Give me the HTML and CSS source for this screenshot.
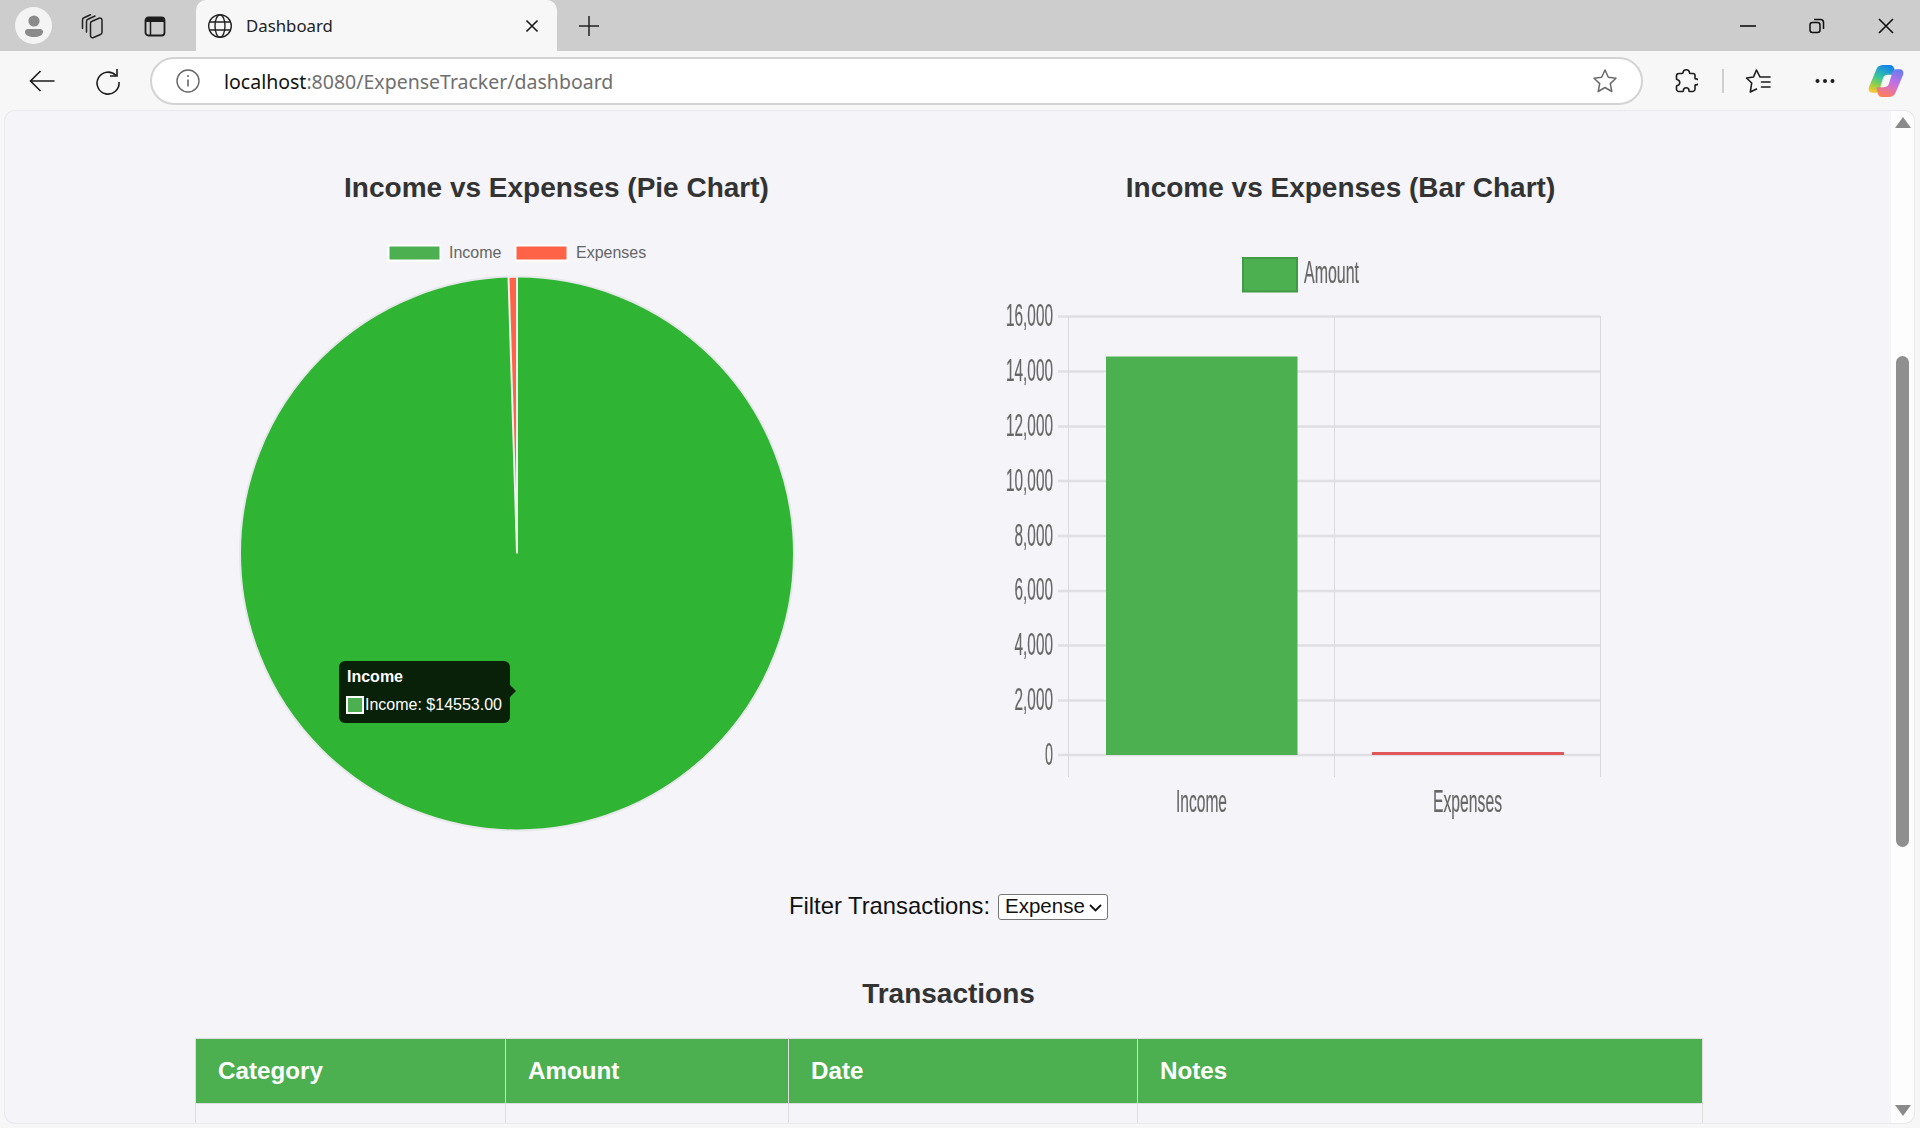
FILE: index.html
```html
<!DOCTYPE html>
<html lang="en">
<head>
<meta charset="utf-8">
<title>Dashboard</title>
<link rel="stylesheet" href="styles.css">
</head>
<body>
<div class="browser">
  <header class="tabstrip">
    <div class="avatar">
      <svg width="24" height="24" viewBox="0 0 24 24"><circle cx="12" cy="7" r="5.6" fill="#8b8b8b"/><path d="M3 18a3 3 0 0 1 3-3h12a3 3 0 0 1 3 3c0 3-4 5-9 5s-9-2-9-5z" fill="#8b8b8b"/></svg>
    </div>
    <button class="strip-icon first">
      <svg width="26" height="26" viewBox="0 0 26 26" fill="none" stroke="#222" stroke-width="1.500" stroke-linejoin="round" stroke-linecap="round"><path d="M10.500 10.500c0-1 .5-1.800 1.500-2.200l7-3c1.500-.6 3 .4 3 2v12c0 1-.5 1.800-1.500 2.200l-7 3c-1.500.6-3-.4-3-2z"/><path d="M6.500 19V8.500c0-1 .5-1.800 1.500-2.200L15 3"/><path d="M2.500 15.500V7c0-1 .5-1.800 1.500-2.200l6.500-3"/></svg>
    </button>
    <button class="strip-icon second">
      <svg width="24" height="24" viewBox="0 0 24 24"><rect x="2.500" y="3.500" width="19" height="18" rx="3" fill="none" stroke="#1d1d1d" stroke-width="1.800"/><path d="M3 8V6a3 3 0 0 1 3-2.500h12A3 3 0 0 1 21 6v2z" fill="#1d1d1d"/><path d="M7.500 8v13" stroke="#1d1d1d" stroke-width="1.500"/></svg>
    </button>
    <div class="tab">
      <svg width="26" height="26" viewBox="0 0 26 26" fill="none" stroke="#222" stroke-width="1.400"><circle cx="13" cy="13" r="11.300"/><ellipse cx="13" cy="13" rx="5" ry="11.300"/><path d="M2.500 9h21M2.500 17h21"/></svg>
      <span class="tab-title">Dashboard</span>
      <svg class="tab-close" width="14" height="14" viewBox="0 0 14 14" stroke="#1a1a1a" stroke-width="1.600"><path d="M1.500 1.500l11 11M12.500 1.500l-11 11"/></svg>
    </div>
    <button class="new-tab">
      <svg width="22" height="22" viewBox="0 0 22 22" stroke="#222" stroke-width="1.500"><path d="M11 1v20M1 11h20"/></svg>
    </button>
    <div class="window-controls">
      <svg width="16" height="16" viewBox="0 0 16 16" stroke="#111" stroke-width="1.600"><path d="M0 8h16"/></svg>
      <svg width="16" height="16" viewBox="0 0 16 16" fill="none" stroke="#111" stroke-width="1.500"><rect x="1" y="4.500" width="10" height="10" rx="2.500"/><path d="M5 1.500h6.500A3 3 0 0 1 14.500 4.500V11"/></svg>
      <svg width="16" height="16" viewBox="0 0 16 16" stroke="#111" stroke-width="1.600"><path d="M1 1l14 14M15 1L1 15"/></svg>
    </div>
  </header>

  <nav class="toolbar">
    <button class="tool back">
      <svg width="26" height="24" viewBox="0 0 26 24" fill="none" stroke="#1c1c1c" stroke-width="1.600"><path d="M25.500 12H1.500M11.500 2L1.500 12l10 10"/></svg>
    </button>
    <button class="tool reload">
      <svg width="26" height="28" viewBox="0 0 26 28" fill="none" stroke="#1c1c1c" stroke-width="1.600"><path d="M21 8.500A11 11 0 1 0 24 15"/><path d="M22 2v7h-7"/></svg>
    </button>
    <div class="address">
      <svg width="24" height="24" viewBox="0 0 24 24" fill="none" stroke="#666" stroke-width="1.400"><circle cx="12" cy="12" r="11"/><path d="M12 10.500v7" stroke-width="1.600"/><circle cx="12" cy="7" r="1" fill="#666" stroke="none"/></svg>
      <span class="url"><span class="host">localhost</span>:8080/ExpenseTracker/dashboard</span>
      <svg class="addr-star" width="26" height="26" viewBox="0 0 26 26" fill="none" stroke="#6a6a6a" stroke-width="1.500" stroke-linejoin="round"><path d="M13 2l3.300 7.300 7.700.9-5.700 5.400 1.500 7.900-6.800-4-6.800 4 1.500-7.900L2 10.200l7.700-.9z"/></svg>
    </div>
    <button class="tool puzzle">
      <svg width="24" height="26" viewBox="0 0 24 26" fill="none" stroke="#1c1c1c" stroke-width="1.600" stroke-linejoin="round"><path d="M9 4.500a3.300 3.300 0 0 1 6.500 0c0 .8 0 1 .5 1h3a2 2 0 0 1 2 2v2.700c0 .6.500.7 1 .7a3 3 0 0 1 0 6c-.5 0-1 0-1 .6V21a2.500 2.500 0 0 1-2.500 2.500h-3c-.6 0-.5-.5-.5-1a2.800 2.800 0 0 0-5.600 0c0 .5 0 1-.5 1H5a2.500 2.500 0 0 1-2.500-2.500v-2.700c0-.6.500-.6 1-.8a3 3 0 0 0 0-5.800c-.5-.2-1-.2-1-.8V8a2.500 2.500 0 0 1 2.500-2.500h3c.5 0 1-.2 1-1z"/></svg>
    </button>
    <span class="divider"></span>
    <button class="tool favs">
      <svg width="26" height="26" viewBox="0 0 26 26" fill="none" stroke="#1c1c1c" stroke-width="1.600" stroke-linejoin="round"><path d="M15 9l-3.500-7-3 7-7 1 5.200 5-1.400 9 6.700-3.300"/><path d="M15 9h10M16.500 14h8.500M16.500 19h8.500" stroke-linecap="round"/></svg>
    </button>
    <button class="tool dots">
      <svg width="20" height="6" viewBox="0 0 20 6" fill="#1c1c1c"><circle cx="2.500" cy="3" r="2"/><circle cx="10" cy="3" r="2"/><circle cx="17.500" cy="3" r="2"/></svg>
    </button>
    <button class="tool copilot">
      <svg width="36" height="34" viewBox="0 0 34 32">
        <defs>
          <linearGradient id="cpA" x1="0.650" y1="0" x2="0.250" y2="1"><stop offset="0" stop-color="#1583ee"/><stop offset="0.450" stop-color="#35c4a0"/><stop offset="0.750" stop-color="#8fd04a"/><stop offset="1" stop-color="#f7c832"/></linearGradient>
          <linearGradient id="cpB" x1="0.750" y1="0" x2="0.350" y2="1"><stop offset="0" stop-color="#6b7cf0"/><stop offset="0.500" stop-color="#c86fe0"/><stop offset="1" stop-color="#ff7d5c"/></linearGradient>
        </defs>
        <path d="M15 1H21C23 1 24 2 25 5L26 10H19C16 10 14.500 12 14 14L11 24C10.500 26 9 27 7 27H4C1.500 27 0 25 .8 22L8 5C9 2 12 1 15 1Z" fill="url(#cpA)"/>
        <path d="M19 31H13C11 31 10 30 9 27L8 22H15C18 22 19.500 20 20 18L23 8C23.500 6 25 5 27 5H30C32.500 5 34 7 33.200 10L26 27C25 30 22 31 19 31Z" fill="url(#cpB)"/>
      </svg>
    </button>
  </nav>

  <div class="viewport">
    <main class="page">
      <section class="charts">
        <div class="chart-box pie-box">
          <h2 class="chart-title">Income vs Expenses (Pie Chart)</h2>
          <div class="canvas-wrap">
            <svg class="chart-svg" width="785" height="640" viewBox="163 220 785 640">
              <rect x="388.500" y="245.500" width="52" height="15" fill="#4caf50" stroke="#fff" stroke-width="2"/>
              <text class="legend-small" x="449" y="257.500">Income</text>
              <rect x="515.500" y="245.500" width="52" height="15" fill="#ff6347" stroke="#fff" stroke-width="2"/>
              <text class="legend-small" x="576" y="257.500">Expenses</text>
              <circle cx="517" cy="553.500" r="277" fill="#2fb533" stroke="#e8e8ec" stroke-width="2"/>
              <path d="M517 553.500L508.500 277A277 277 0 0 1 517 276.500z" fill="#ff6347" stroke="#f0f0f0" stroke-width="2"/>
            </svg>
            <div class="tooltip">
              <div class="tooltip-title">Income</div>
              <div class="tooltip-row"><span class="tooltip-swatch"></span>Income: $14553.00</div>
            </div>
          </div>
        </div>
        <div class="chart-box">
          <h2 class="chart-title">Income vs Expenses (Bar Chart)</h2>
          <div class="canvas-wrap">
            <svg class="chart-svg" width="785" height="640" viewBox="948 220 785 640">
              <rect x="1243" y="258" width="54" height="33.500" fill="#4caf50" stroke="#419b46" stroke-width="2"/>
              <text class="axis" x="1304" y="283" textLength="55" lengthAdjust="spacingAndGlyphs">Amount</text>
              <g class="grid-h">
                <path d="M1058 316.500H1600M1058 371.500H1600M1058 426.500H1600M1058 481H1600M1058 536H1600M1058 591H1600M1058 645.500H1600M1058 700.500H1600M1058 755H1600"/>
              </g>
              <path class="grid-v" d="M1068.500 316V777M1334.500 316V777M1600.500 316V777"/>
              <g>
                <text class="axis" x="1006" y="326" textLength="47" lengthAdjust="spacingAndGlyphs">16,000</text>
                <text class="axis" x="1006" y="381" textLength="47" lengthAdjust="spacingAndGlyphs">14,000</text>
                <text class="axis" x="1006" y="436" textLength="47" lengthAdjust="spacingAndGlyphs">12,000</text>
                <text class="axis" x="1006" y="491" textLength="47" lengthAdjust="spacingAndGlyphs">10,000</text>
                <text class="axis" x="1014.500" y="546" textLength="38.500" lengthAdjust="spacingAndGlyphs">8,000</text>
                <text class="axis" x="1014.500" y="600" textLength="38.500" lengthAdjust="spacingAndGlyphs">6,000</text>
                <text class="axis" x="1014.500" y="655" textLength="38.500" lengthAdjust="spacingAndGlyphs">4,000</text>
                <text class="axis" x="1014.500" y="710" textLength="38.500" lengthAdjust="spacingAndGlyphs">2,000</text>
                <text class="axis" x="1045" y="765" textLength="8" lengthAdjust="spacingAndGlyphs">0</text>
              </g>
              <rect x="1106" y="356.500" width="191.500" height="398.500" fill="#4caf50"/>
              <rect x="1372" y="752" width="192" height="3" fill="#e0575a"/>
              <text class="axis" x="1176" y="812" textLength="51" lengthAdjust="spacingAndGlyphs">Income</text>
              <text class="axis" x="1433" y="812" textLength="69" lengthAdjust="spacingAndGlyphs">Expenses</text>
            </svg>
          </div>
        </div>
      </section>

      <div class="filter">
        <label class="filter-label" for="filter">Filter Transactions:</label>
        <span class="select-wrap">
          <select class="filter-select" id="filter">
            <option>All</option>
            <option>Income</option>
            <option selected>Expense</option>
          </select>
          <svg class="select-chevron" width="13" height="8" viewBox="0 0 13 8" fill="none" stroke="#111" stroke-width="1.800"><path d="M1 1l5.500 5.500L12 1"/></svg>
        </span>
      </div>

      <h2 class="section-title">Transactions</h2>

      <table class="tx-table">
        <thead>
          <tr>
            <th class="col-category">Category</th>
            <th class="col-amount">Amount</th>
            <th class="col-date">Date</th>
            <th class="col-notes">Notes</th>
          </tr>
        </thead>
        <tbody>
          <tr class="empty-row"><td></td><td></td><td></td><td></td></tr>
        </tbody>
      </table>
    </main>
    <aside class="scrollbar">
      <span class="arrow-up"></span>
      <span class="thumb"></span>
      <span class="arrow-down"></span>
    </aside>
  </div>
</div>
</body>
</html>
```
FILE: styles.css
```css
* { box-sizing: border-box; }
html, body { margin: 0; height: 100%; overflow: hidden; }
body { font-family: "Liberation Sans", Arial, sans-serif; background: #f7f7f7; }
button { border: 0; background: none; padding: 0; display: flex; align-items: center; justify-content: center; }

.browser { height: 1128px; display: flex; flex-direction: column; }

.tabstrip { height: 51px; flex: none; background: #cdcdcd; display: flex; align-items: center; }
.avatar { width: 37px; height: 37px; margin-left: 15px; border-radius: 50%; background: #f4f4f4; display: flex; align-items: center; justify-content: center; }
.strip-icon { width: 26px; height: 26px; }
.strip-icon.first { margin-left: 28px; }
.strip-icon.second { margin-left: 36px; }
.tab { align-self: stretch; width: 361px; margin-left: 28px; padding: 0 17px 0 11px; background: #f7f7f7; border-radius: 10px 10px 0 0; display: flex; align-items: center; }
.tab-title { margin-left: 13px; font-family: "Noto Sans", sans-serif; font-size: 16.800px; color: #222; flex: 1; }
.tab-close { margin-right: 1px; }
.new-tab { width: 22px; height: 22px; margin-left: 21px; }
.window-controls { margin-left: auto; margin-right: 26px; display: flex; gap: 53px; align-items: center; }

.toolbar { height: 60px; flex: none; background: #f7f7f7; display: flex; align-items: center; }
.tool { flex: none; }
.back { margin-left: 29px; }
.reload { margin-left: 40px; }
.address { width: 1493.500px; height: 48px; margin-left: 28.500px; border: 2px solid #d3d3d3; border-radius: 24px; background: #fff; display: flex; align-items: center; padding: 0 23px 0 24px; }
.url { margin-left: 24.500px; flex: 1; font-family: "Noto Sans", sans-serif; font-size: 19.500px; color: #6f6f6f; white-space: nowrap; }
.host { color: #111; }
.puzzle { margin-left: 31px; }
.divider { width: 2px; height: 24px; margin-left: 24px; background: #cfcfcf; flex: none; }
.favs { margin-left: 21px; }
.dots { margin-left: 44px; }
.copilot { margin-left: 33px; }

.viewport { flex: 1; min-height: 0; margin: 0 6px 5px 5px; display: flex; background: #f4f4f9; border-radius: 10px; overflow: hidden; box-shadow: 0 0 0 1px #e9e9ec; }
.page { flex: 1; min-width: 0; overflow: hidden; padding-top: 60px; }
.charts { display: flex; justify-content: center; }
.chart-box { width: 785px; }
.chart-title { margin: 0; height: 33px; font-size: 28px; line-height: 33px; font-weight: 700; color: #333; text-align: center; }
.pie-box .chart-title { padding-left: 2px; }
.canvas-wrap { position: relative; height: 640px; margin-top: 16px; }
.chart-svg { display: block; }
.legend-small { font-size: 16px; fill: #666; }
.axis { font-size: 32px; fill: #666; stroke: #666; stroke-width: .2px; filter: blur(.35px); }
.grid-h path { fill: none; stroke: #dfdfe4; stroke-width: 2.500; }
.grid-v { fill: none; stroke: #d9d9de; stroke-width: 1; }

.tooltip { position: absolute; left: 176px; top: 441px; width: 171px; height: 62px; padding: 7px 7px 0 8px; background: #0a2109; border-radius: 6px; color: #fff; font-size: 16px; }
.tooltip::after { content: ""; position: absolute; right: -6px; top: 24px; border-style: solid; border-width: 6px 0 6px 6px; border-color: transparent transparent transparent #0a2109; }
.tooltip-title { font-weight: 700; line-height: 18px; }
.tooltip-row { display: flex; align-items: center; margin-top: 10px; margin-left: -1px; line-height: 18px; white-space: nowrap; }
.tooltip-swatch { width: 18px; height: 18px; margin-right: 1px; background: #4caf50; border: 2px solid #fff; flex: none; }

.filter { margin-top: 34px; height: 26px; display: flex; justify-content: center; align-items: center; gap: 8px; padding-left: 1px; }
.filter-label { font-size: 23.800px; line-height: 24px; margin-top: -2px; color: #111; }
.select-wrap { position: relative; display: block; width: 110px; height: 26px; }
.filter-select { display: block; appearance: none; width: 110px; height: 26px; padding: 0 0 2px 6px; font-family: "Liberation Sans", Arial, sans-serif; font-size: 20.500px; line-height: 22px; background: #fff; border: 1px solid #767676; border-radius: 3px; color: #111; }
.select-chevron { position: absolute; right: 6px; top: 10px; pointer-events: none; }
.section-title { margin: 57px 0 0; padding-left: 1px; height: 33px; font-size: 28px; line-height: 33px; font-weight: 700; color: #333; text-align: center; }
.tx-table { width: 1508px; margin: 28px 0 0 189.500px; border-collapse: collapse; table-layout: fixed; }
.tx-table th { height: 65px; padding: 0 0 0 22.500px; background: #4caf50; color: #fff; font-size: 24.200px; font-weight: 700; text-align: left; border: 1px solid #ddd; }
.tx-table td { height: 65px; border: 1px solid #ddd; }
.col-category { width: 310px; }
.col-amount { width: 283px; }
.col-date { width: 349px; }

.scrollbar { width: 23px; flex: none; background: #fdfdfd; display: flex; flex-direction: column; align-items: center; padding-top: 6px; }
.arrow-up { width: 0; height: 0; flex: none; border-style: solid; border-width: 0 8px 11px; border-color: transparent transparent #8a8a8a; }
.thumb { width: 13px; height: 491px; flex: none; margin-top: 228px; background: #8f8f8f; border-radius: 7px; }
.arrow-down { width: 0; height: 0; flex: none; margin-top: 258px; border-style: solid; border-width: 11px 8px 0; border-color: #8a8a8a transparent transparent; }
```
